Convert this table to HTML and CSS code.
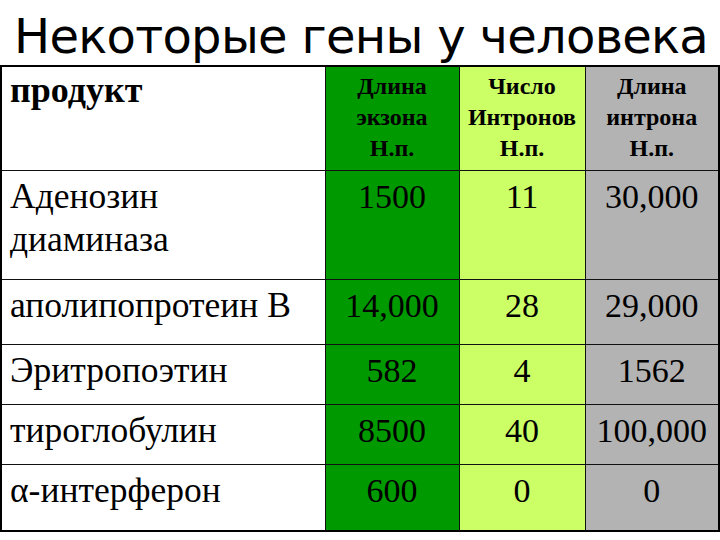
FILE: index.html
```html
<!DOCTYPE html>
<html lang="ru">
<head>
<meta charset="utf-8">
<title>Некоторые гены у человека</title>
<link rel="stylesheet" href="styles.css">
</head>
<body>
<h1 class="title">Некоторые гены у человека</h1>
<table class="genes">
  <colgroup>
    <col class="c-name">
    <col class="c-exon">
    <col class="c-count">
    <col class="c-intron">
  </colgroup>
  <thead>
    <tr class="r-head">
      <th class="name head-name">продукт</th>
      <th class="exon head-small">Длина<br>экзона<br>Н.п.</th>
      <th class="count head-small">Число<br>Интронов<br>Н.п.</th>
      <th class="intron head-small">Длина<br>интрона<br>Н.п.</th>
    </tr>
  </thead>
  <tbody>
    <tr class="r1">
      <td class="name">Аденозин<br>диаминаза</td>
      <td class="exon num">1500</td>
      <td class="count num">11</td>
      <td class="intron num">30,000</td>
    </tr>
    <tr class="r2">
      <td class="name">аполипопротеин В</td>
      <td class="exon num">14,000</td>
      <td class="count num">28</td>
      <td class="intron num">29,000</td>
    </tr>
    <tr class="r3">
      <td class="name">Эритропоэтин</td>
      <td class="exon num">582</td>
      <td class="count num">4</td>
      <td class="intron num">1562</td>
    </tr>
    <tr class="r4">
      <td class="name">тироглобулин</td>
      <td class="exon num">8500</td>
      <td class="count num">40</td>
      <td class="intron num">100,000</td>
    </tr>
    <tr class="r5">
      <td class="name">α-интерферон</td>
      <td class="exon num">600</td>
      <td class="count num">0</td>
      <td class="intron num">0</td>
    </tr>
  </tbody>
</table>
</body>
</html>
```
FILE: styles.css
```css
html, body {
  margin: 0;
  padding: 0;
  background: #ffffff;
}

.title {
  margin: 0;
  height: 65px;
  box-sizing: border-box;
  padding: 8px 0 0 14px;
  font-family: "DejaVu Sans", sans-serif;
  font-weight: normal;
  font-size: 48px;
  line-height: 57px;
  letter-spacing: -0.7px;
  color: #000;
  white-space: nowrap;
}

.genes {
  border-collapse: collapse;
  table-layout: fixed;
  width: 718px;
  border: 2px solid #000;
  font-family: "Liberation Serif", "Times New Roman", serif;
  color: #000;
}

.c-name { width: 324px; }
.c-exon { width: 134px; }
.c-count { width: 126px; }
.c-intron { width: 134px; }

.genes th,
.genes td {
  border: 1px solid #111;
  vertical-align: top;
  padding: 0;
}

.name {
  background: #fff;
  text-align: left;
  padding-left: 8px !important;
}

.exon { background: #009900; }
.count { background: #ccff66; }
.intron { background: #b3b3b3; }

.head-name {
  font-size: 36px;
  font-weight: bold;
  line-height: 40px;
  padding-top: 3px !important;
}

.head-small {
  font-size: 24px;
  font-weight: bold;
  line-height: 31px;
  text-align: center;
  padding-top: 4px !important;
}

.genes td.name {
  font-size: 35.5px;
  line-height: 43px;
  padding-top: 4px;
}

.num {
  font-size: 34px;
  line-height: 40px;
  text-align: center;
  padding-top: 6px !important;
}

.r-head { height: 104px; }
.r1 { height: 109px; }
.r2 { height: 65px; }
.r3 { height: 60px; }
.r4 { height: 60px; }
.r5 { height: 67px; }
```
